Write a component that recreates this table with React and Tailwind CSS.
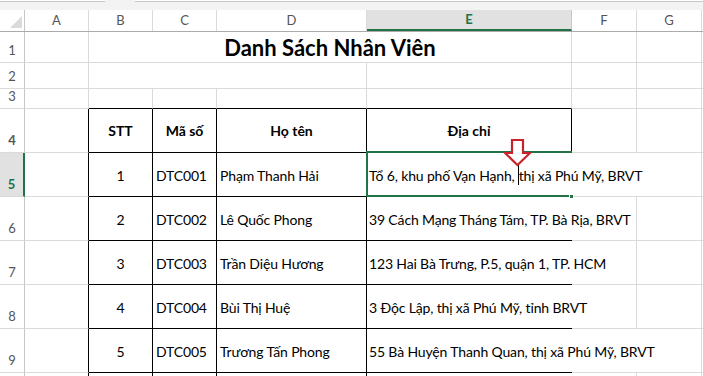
import React from "react";

const FONT = { fontFamily: "Lato, 'Noto Sans', sans-serif" };

const rows = [
  { n: 1, stt: "1", code: "DTC001", name: "Phạm Thanh Hải", addr: "Tổ 6, khu phố Vạn Hạnh, thị xã Phú Mỹ, BRVT", selected: true, spill: true },
  { n: 2, stt: "2", code: "DTC002", name: "Lê Quốc Phong", addr: "39 Cách Mạng Tháng Tám, TP. Bà Rịa, BRVT" },
  { n: 3, stt: "3", code: "DTC003", name: "Trần Diệu Hương", addr: "123 Hai Bà Trưng, P.5, quận 1, TP. HCM" },
  { n: 4, stt: "4", code: "DTC004", name: "Bùi Thị Huệ", addr: "3 Độc Lập, thị xã Phú Mỹ, tỉnh BRVT" },
  { n: 5, stt: "5", code: "DTC005", name: "Trương Tấn Phong", addr: "55 Bà Huyện Thanh Quan, thị xã Phú Mỹ, BRVT", spill: true },
];

function RowNum({ n, selected }) {
  return (
    <div
      className={
        "w-[25px] shrink-0 flex items-end justify-center pb-[2px] text-[13px] border-b border-[#dadada] " +
        (selected
          ? "bg-[#e1e1e1] text-[#217346] font-bold border-r-2 border-r-[#217346]"
          : "bg-white text-[#555] border-r border-r-[#c6c6c6]")
      }
    >
      {n}
    </div>
  );
}

export default function App() {
  return (
    <div className="w-[703px] h-[376px] overflow-hidden bg-white text-black" style={FONT}>
      {/* formula bar remnants */}
      <div className="h-[10px] bg-[#f3f3f3] flex items-start">
        <div className="w-[105px] h-[2px] bg-white border-b border-[#c6c6c6]" />
        <div className="w-[30px]" />
        <div className="flex-1 h-[2px] bg-white border-b border-[#c6c6c6]" />
      </div>

      {/* column headers */}
      <div className="flex h-[22px] text-[13px] text-[#555] border-b border-[#ababab]">
        <div className="w-[25px] shrink-0 relative bg-white border-r border-[#c6c6c6]">
          <svg className="absolute right-[2px] bottom-[3px]" width="12" height="12" viewBox="0 0 12 12">
            <path d="M12 0 L12 12 L0 12 Z" fill="#dadada" />
          </svg>
        </div>
        <div className="w-[64px] shrink-0 flex items-center justify-center border-r border-[#dadada]">A</div>
        <div className="w-[64px] shrink-0 flex items-center justify-center border-r border-[#dadada]">B</div>
        <div className="w-[64px] shrink-0 flex items-center justify-center border-r border-[#dadada]">C</div>
        <div className="w-[150px] shrink-0 flex items-center justify-center border-r border-[#dadada]">D</div>
        <div className="w-[205px] shrink-0 flex items-center justify-center bg-[#e1e1e1] text-[#217346] font-bold border-r border-[#c6c6c6] border-b-2 border-b-[#217346]">E</div>
        <div className="w-[65px] shrink-0 flex items-center justify-center border-r border-[#dadada]">F</div>
        <div className="w-[65px] shrink-0 flex items-center justify-center border-r border-[#dadada]">G</div>
        <div className="flex-1" />
      </div>

      {/* row 1: title */}
      <div className="flex h-[31px]">
        <RowNum n={1} />
        <div className="w-[64px] shrink-0 border-r border-b border-[#dadada]" />
        <div className="w-[483px] shrink-0 flex items-center justify-center text-[22px] font-bold pt-[1px] border-r border-b border-[#dadada]">
          Danh Sách Nhân Viên
        </div>
        <div className="w-[65px] shrink-0 border-r border-b border-[#dadada]" />
        <div className="w-[65px] shrink-0 border-r border-b border-[#dadada]" />
        <div className="flex-1 border-b border-[#dadada]" />
      </div>

      {/* row 2 */}
      <div className="flex h-[26px]">
        <RowNum n={2} />
        <div className="w-[64px] shrink-0 border-r border-b border-[#dadada]" />
        <div className="w-[278px] shrink-0 border-r border-b border-[#dadada]" />
        <div className="w-[205px] shrink-0 border-r border-b border-[#dadada]" />
        <div className="w-[65px] shrink-0 border-r border-b border-[#dadada]" />
        <div className="w-[65px] shrink-0 border-r border-b border-[#dadada]" />
        <div className="flex-1 border-b border-[#dadada]" />
      </div>

      {/* row 3 */}
      <div className="flex h-[20px]">
        <RowNum n={3} />
        <div className="w-[64px] shrink-0 border-r border-b border-[#dadada]" />
        <div className="w-[64px] shrink-0 border-r border-[#dadada] border-b border-b-black" />
        <div className="w-[64px] shrink-0 border-r border-[#dadada] border-b border-b-black" />
        <div className="w-[150px] shrink-0 border-r border-[#dadada] border-b border-b-black" />
        <div className="w-[205px] shrink-0 border-r border-[#dadada] border-b border-b-black" />
        <div className="w-[65px] shrink-0 border-r border-b border-[#dadada]" />
        <div className="w-[65px] shrink-0 border-r border-b border-[#dadada]" />
        <div className="flex-1 border-b border-[#dadada]" />
      </div>

      {/* row 4: table header */}
      <div className="flex h-[44px] text-[14px] font-bold">
        <RowNum n={4} />
        <div className="w-[64px] shrink-0 border-b border-[#dadada] border-r border-r-black" />
        <div className="w-[64px] shrink-0 flex items-center justify-center border-r border-b border-black">STT</div>
        <div className="w-[64px] shrink-0 flex items-center justify-center border-r border-b border-black">Mã số</div>
        <div className="w-[150px] shrink-0 flex items-center justify-center border-r border-b border-black">Họ tên</div>
        <div className="w-[205px] shrink-0 flex items-center justify-center border-r border-b border-black">Địa chỉ</div>
        <div className="w-[65px] shrink-0 border-r border-b border-[#dadada]" />
        <div className="w-[65px] shrink-0 border-r border-b border-[#dadada]" />
        <div className="flex-1 border-b border-[#dadada]" />
      </div>

      {/* data rows */}
      {rows.map((r) => (
        <div key={r.n} className="flex h-[44px] text-[14px] tracking-[-0.15px]">
          <RowNum n={r.n + 4} selected={r.selected} />
          <div className="w-[64px] shrink-0 border-b border-[#dadada] border-r border-r-black" />
          <div className="w-[64px] shrink-0 flex items-center justify-center pt-[2px] border-r border-b border-black">{r.stt}</div>
          <div className="w-[64px] shrink-0 flex items-center pl-[3px] pt-[2px] border-r border-b border-black">{r.code}</div>
          <div className="w-[150px] shrink-0 flex items-center pl-[3px] pt-[2px] border-r border-b border-black">{r.name}</div>
          <div className="w-[205px] shrink-0 relative flex items-center pl-[2px] pt-[2px] border-b border-black">
            {r.selected ? (
              <span className="relative z-10 whitespace-nowrap">
                Tổ 6, khu phố Vạn Hạnh,
                <span className="relative inline-block w-[4px] h-[1px]">
                  <span className="absolute left-[3px] top-[-16px] w-px h-[21px] bg-black" />
                </span>
                thị xã Phú Mỹ, BRVT
              </span>
            ) : (
              <span className="relative z-10 whitespace-nowrap">{r.addr}</span>
            )}
            {r.selected && (
              <>
                <div className="absolute left-[-1px] top-[-2px] right-0 bottom-[-1px] border-t-2 border-l-2 border-b-2 border-[#217346] z-20" />
                <div className="absolute right-[-2px] bottom-[-3px] w-[5px] h-[5px] bg-[#217346] border border-white z-30" />
                <svg className="absolute left-[137px] top-[-14px] z-30" width="28" height="28" viewBox="0 0 28 28">
                  <path
                    d="M8 1 H19 V14 H26 L13.5 26 L1 14 H8 Z"
                    fill="white"
                    stroke="#c8232c"
                    strokeWidth="2.2"
                    strokeLinejoin="miter"
                  />
                </svg>
              </>
            )}
          </div>
          <div className={"w-[65px] shrink-0 border-b border-[#dadada] " + (r.spill ? "" : "border-r")} />
          <div className="w-[65px] shrink-0 border-r border-b border-[#dadada]" />
          <div className="flex-1 border-b border-[#dadada]" />
        </div>
      ))}

      {/* row 10 (cut off) */}
      <div className="flex h-[44px]">
        <div className="w-[25px] shrink-0 bg-white border-r border-[#c6c6c6]" />
        <div className="w-[64px] shrink-0 border-r border-r-black" />
        <div className="w-[64px] shrink-0 border-r border-black" />
        <div className="w-[64px] shrink-0 border-r border-black" />
        <div className="w-[150px] shrink-0 border-r border-black" />
        <div className="w-[205px] shrink-0" />
        <div className="w-[65px] shrink-0 border-r border-[#dadada]" />
        <div className="w-[65px] shrink-0 border-r border-[#dadada]" />
        <div className="flex-1" />
      </div>
    </div>
  );
}
